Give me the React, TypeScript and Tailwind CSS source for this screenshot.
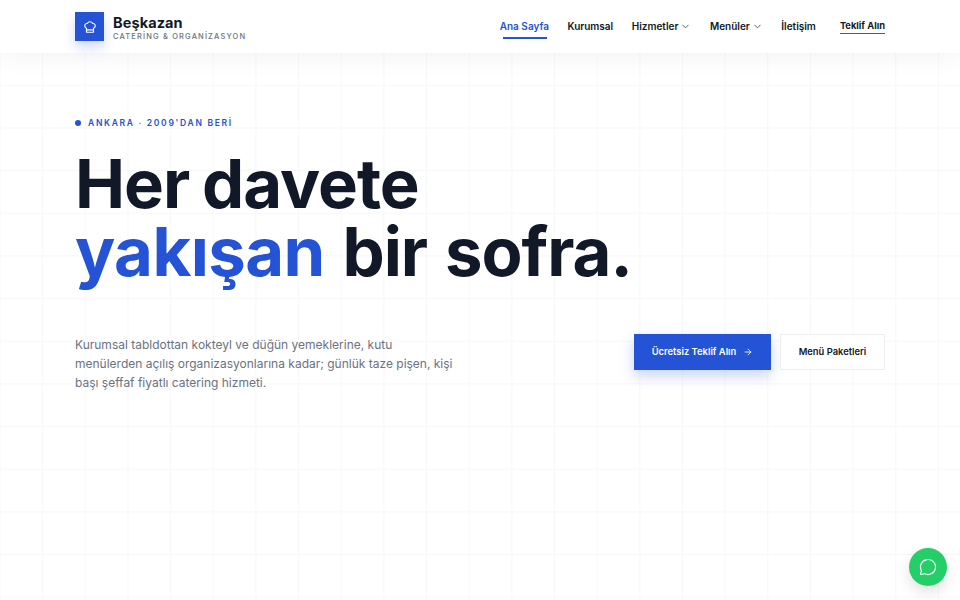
import { ChevronDown, ArrowRight, ChefHat, MessageCircle } from "lucide-react";

const inter = "font-['Inter','Liberation_Sans',sans-serif]";

function NavLink({ label, active, chevron }: { label: string; active?: boolean; chevron?: boolean }) {
  return (
    <a className={`relative flex items-center gap-[2px] text-[10px] font-semibold ${active ? "text-[#2453d6]" : "text-[#111827]"}`}>
      {label}
      {chevron && <ChevronDown size={11} strokeWidth={1.8} className="text-[#374151]" />}
      {active && <span className="absolute left-[3px] right-[2px] top-[18px] h-[1.5px] bg-[#2453d6]" />}
    </a>
  );
}

export default function App() {
  return (
    <div className={`${inter} relative h-[600px] w-[960px] overflow-hidden bg-white bg-[linear-gradient(to_right,#f7f7f8_1px,transparent_1px),linear-gradient(to_bottom,#f7f7f8_1px,transparent_1px)] bg-[size:42.67px_42.67px] bg-[position:-0.5px_-0.5px]`}>
      <header className="relative z-10 flex h-[53px] items-center justify-between bg-white px-[75px] shadow-[0_4px_24px_rgba(15,23,42,0.05)]">
        <div className="flex items-center gap-[9px]">
          <div className="flex h-[29px] w-[29px] items-center justify-center bg-[#2453d6] shadow-[0_6px_12px_rgba(36,83,214,0.22)]">
            <ChefHat size={14} strokeWidth={2} className="text-white" />
          </div>
          <div className="flex flex-col pt-[2px]">
            <span className="text-[14.5px] leading-[17px] font-bold tracking-[0.1px] text-[#111827]">Beşkazan</span>
            <span className="mt-[1px] text-[7.5px] leading-[10px] font-medium tracking-[1.15px] text-[#6b7280]">CATERİNG &amp; ORGANİZASYON</span>
          </div>
        </div>
        <nav className="flex items-center gap-[18.5px]">
          <NavLink label="Ana Sayfa" active />
          <NavLink label="Kurumsal" />
          <NavLink label="Hizmetler" chevron />
          <NavLink label="Menüler" chevron />
          <NavLink label="İletişim" />
          <a className="ml-[5.5px] border-b-[1.5px] border-[#3d5ca8] text-[9.3px] font-bold text-[#111827]">Teklif Alın</a>
        </nav>
      </header>

      <main className="px-[75px] pt-[64px]">
        <div className="flex items-center gap-[7px] text-[8.5px] leading-[12px] font-semibold tracking-[1.7px] text-[#2453d6]">
          <span className="h-[6px] w-[6px] rounded-full bg-[#2453d6]" />
          ANKARA · 2009'DAN BERİ
        </div>
        <h1 className="mt-[20.5px] text-[67px] leading-[68px] font-bold tracking-[-1px] [word-spacing:-2px] text-[#111827]">
          Her davete
          <br />
          <span className="[word-spacing:3px]">
            <span className="tracking-[-0.6px] text-[#2453d6]">yakışan</span> bir sofra.
          </span>
        </h1>
        <div className="mt-[48.5px] flex items-start justify-between">
          <p className="w-[385px] pt-[1px] text-[12px] leading-[19.2px] text-[#6b7280]">
            Kurumsal tabldottan kokteyl ve düğün yemeklerine, kutu menülerden açılış organizasyonlarına kadar; günlük taze pişen, kişi başı şeffaf fiyatlı catering hizmeti.
          </p>
          <div className="flex gap-[9px]">
            <a className="flex h-[36px] w-[137px] items-center justify-center gap-[7px] bg-[#2453d6] text-[9.4px] font-semibold text-white shadow-[0_6px_14px_rgba(36,83,214,0.25)]">
              Ücretsiz Teklif Alın
              <ArrowRight size={10} strokeWidth={2} />
            </a>
            <a className="flex h-[36px] w-[105px] items-center justify-center border border-[#eceef1] bg-white text-[9.4px] font-semibold text-[#111827]">
              Menü Paketleri
            </a>
          </div>
        </div>
      </main>

      <div className="absolute top-[548px] left-[909px] flex h-[38px] w-[38px] items-center justify-center rounded-full bg-[#25cf68] shadow-[0_6px_14px_rgba(0,0,0,0.12)]">
        <MessageCircle size={18} strokeWidth={1.6} className="text-white" />
      </div>
    </div>
  );
}
